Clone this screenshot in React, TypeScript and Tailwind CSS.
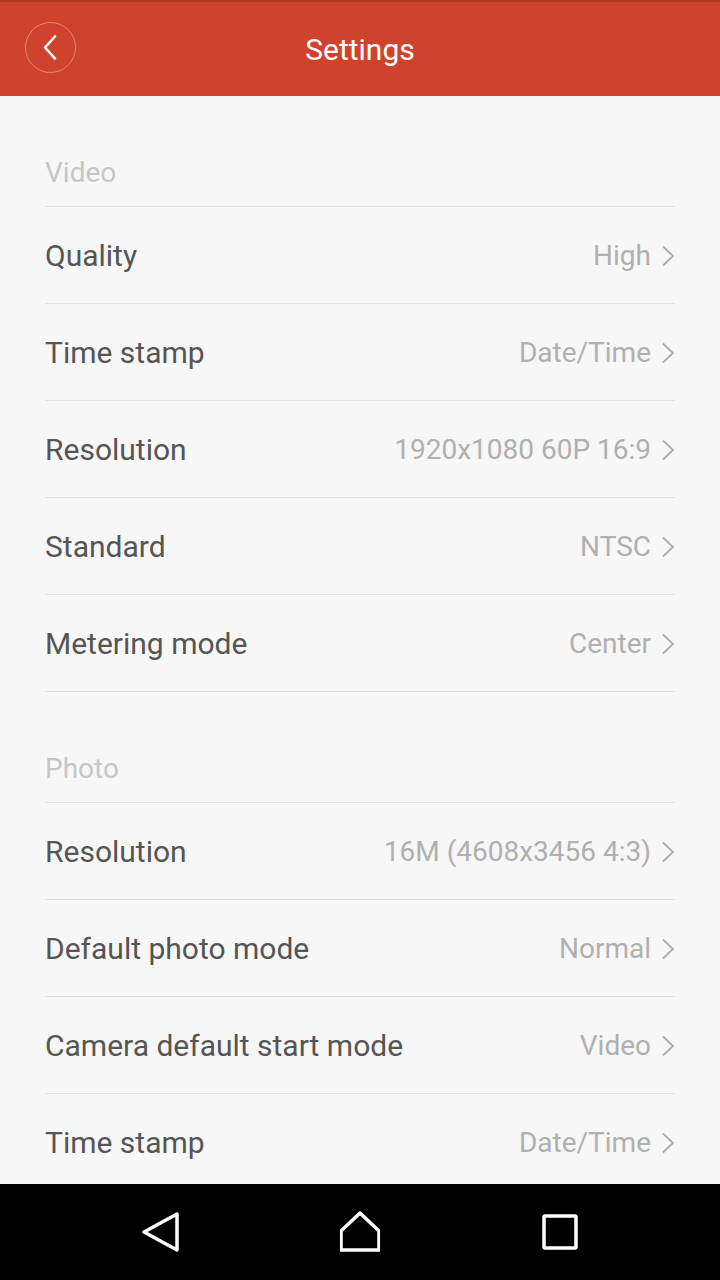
type Row = { label: string; value: string }

const sections: { title: string; rows: Row[] }[] = [
  {
    title: 'Video',
    rows: [
      { label: 'Quality', value: 'High' },
      { label: 'Time stamp', value: 'Date/Time' },
      { label: 'Resolution', value: '1920x1080 60P 16:9' },
      { label: 'Standard', value: 'NTSC' },
      { label: 'Metering mode', value: 'Center' },
    ],
  },
  {
    title: 'Photo',
    rows: [
      { label: 'Resolution', value: '16M (4608x3456 4:3)' },
      { label: 'Default photo mode', value: 'Normal' },
      { label: 'Camera default start mode', value: 'Video' },
      { label: 'Time stamp', value: 'Date/Time' },
    ],
  },
]

function Chevron() {
  return (
    <svg width="14" height="22" viewBox="0 0 14 22" className="ml-[10px] shrink-0">
      <path d="M2 1.5 L12 11 L2 20.5" fill="none" stroke="#ababab" strokeWidth="1.8" />
    </svg>
  )
}

function SettingRow({ row }: { row: Row }) {
  return (
    <div className="flex items-center justify-between h-[97px] border-b border-[#e2e2e2]">
      <span className="text-[30px] text-[#555555]">{row.label}</span>
      <div className="flex items-center pt-[2px]">
        <span className="text-[28px] text-[#b0b0b0]">{row.value}</span>
        <Chevron />
      </div>
    </div>
  )
}

export default function App() {
  return (
    <div className="w-[720px] h-[1280px] flex flex-col bg-[#f7f7f7] overflow-hidden" style={{ fontFamily: 'Roboto, "Noto Sans", sans-serif' }}>
      <header className="h-[96px] shrink-0 bg-[#cf422b] border-t-2 border-[#b03522] relative flex items-center justify-center">
        <button className="absolute left-[25px] top-[20px] w-[51px] h-[51px] rounded-full border border-[#e28a78] flex items-center justify-center">
          <svg width="14" height="25" viewBox="0 0 14 25" className="-ml-[1px]">
            <path d="M12 1.5 L2 12.5 L12 23.5" fill="none" stroke="white" strokeWidth="2.6" strokeLinecap="round" strokeLinejoin="round" />
          </svg>
        </button>
        <h1 className="text-[30px] text-white">Settings</h1>
      </header>

      <main className="flex-1 px-[45px] overflow-hidden">
        {sections.map((s) => (
          <section key={s.title}>
            <div className="h-[111px] flex items-end pb-[12px] border-b border-[#e2e2e2]">
              <span className="text-[28px] text-[#c6c6c6]">{s.title}</span>
            </div>
            {s.rows.map((r, i) => (
              <SettingRow key={i} row={r} />
            ))}
          </section>
        ))}
      </main>

      <nav className="h-[96px] shrink-0 bg-black flex items-center justify-center gap-[160px]">
        <svg width="40" height="42" viewBox="0 0 40 42">
          <path d="M37 3 L37 39 L4 21 Z" fill="none" stroke="white" strokeWidth="3.5" strokeLinejoin="round" />
        </svg>
        <svg width="40" height="42" viewBox="0 0 40 42">
          <path d="M20 2 L39 20 L39 39 L1 39 L1 20 Z" fill="none" stroke="white" strokeWidth="3.5" strokeLinejoin="round" />
        </svg>
        <svg width="40" height="42" viewBox="0 0 40 42">
          <rect x="4" y="5" width="32" height="32" fill="none" stroke="white" strokeWidth="3.5" rx="1" />
        </svg>
      </nav>
    </div>
  )
}
